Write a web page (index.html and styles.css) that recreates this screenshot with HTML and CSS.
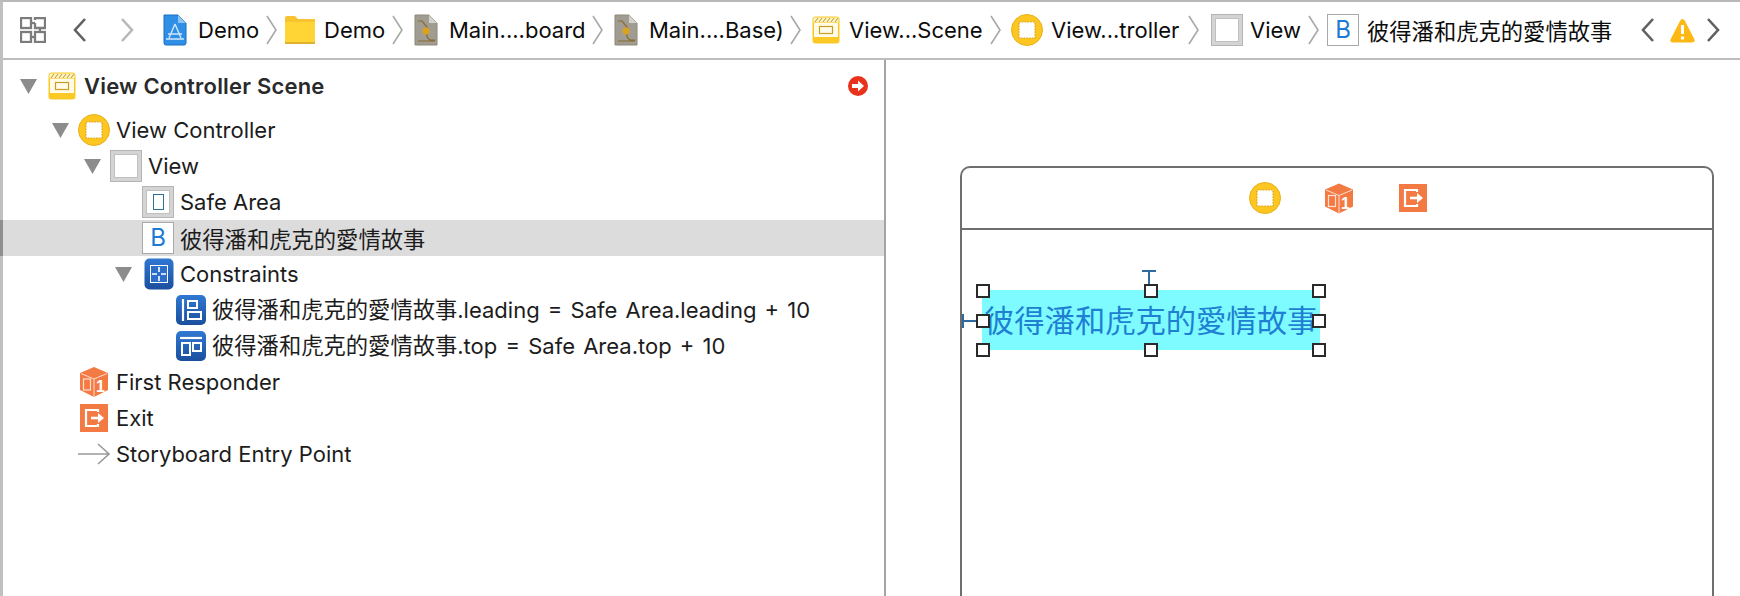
FILE: index.html
```html
<!DOCTYPE html>
<html lang="zh-Hant">
<head>
<meta charset="utf-8">
<title>Storyboard</title>
<link rel="stylesheet" href="styles.css">
</head>
<body>
<svg class="defs" width="0" height="0" aria-hidden="true">
  <defs>
    <linearGradient id="blue" x1="0" y1="0" x2="0" y2="1"><stop offset="0" stop-color="#2f78d2"/><stop offset="1" stop-color="#1b4f9e"/></linearGradient>
    <symbol id="chev" viewBox="0 0 11 30"><path d="M1 1 L10 15 L1 29" fill="none" stroke="#a8a8a8" stroke-width="1.6"/></symbol>
    <symbol id="doc-blue" viewBox="0 0 24 32">
      <path d="M1 1 H15 L23 9 V29 Q23 31 21 31 H3 Q1 31 1 29 Z" fill="#2f8fe6" stroke="#1d6fc0"/>
      <path d="M15 1 V9 H23" fill="#8cc4f4"/>
      <path d="M12 10 L6 24 M12 10 L18 24 M5 20 H19 M3 25 H21" fill="none" stroke="#cfe6fb" stroke-width="1.4"/>
    </symbol>
    <symbol id="folder" viewBox="0 0 32 30">
      <path d="M1 3 Q1 1 3 1 H11 L14 4 H31 V28 Q31 29 30 29 H2 Q1 29 1 28 Z" fill="#f7c331"/>
      <path d="M1 7 H31 V27 Q31 28 30 28 H2 Q1 28 1 27 Z" fill="#ffd535"/>
      <path d="M1 28 H31" stroke="#d9a92c" stroke-width="1.6"/>
    </symbol>
    <symbol id="board" viewBox="0 0 24 32">
      <path d="M1 1 H15 L23 9 V31 H1 Z" fill="#a09c92" stroke="#8d8878"/>
      <path d="M15 1 V9 H23" fill="#d3d1cb"/>
      <path d="M4 7 H8 L13 13 V23 L16 26 H21 M4 27 H21" fill="none" stroke="#8a6b2c" stroke-width="1.2"/>
      <circle cx="12" cy="17" r="3.6" fill="#d9a21f"/>
    </symbol>
    <symbol id="scene" viewBox="0 0 28 28">
      <rect x="0.5" y="0.5" width="27" height="27" rx="3" fill="#fbc925"/>
      <rect x="1.5" y="1.5" width="25" height="5" fill="#fff3c0"/>
      <path d="M3 6 L6 2 M7 6 L10 2 M11 6 L14 2 M15 6 L18 2 M19 6 L22 2 M23 6 L26 2" stroke="#b79a3a" stroke-width="1"/>
      <rect x="2" y="7" width="24" height="14" fill="#fffbe6"/>
      <rect x="7.500" y="10.500" width="13" height="7" fill="none" stroke="#c89f24" stroke-width="1.2"/>
    </symbol>
    <symbol id="vc" viewBox="0 0 32 32">
      <circle cx="16" cy="16" r="15.500" fill="#fdc621" stroke="#e8b01a" stroke-width="1"/>
      <rect x="8" y="8" width="16" height="16" fill="#fff" stroke="#d8a420" stroke-width="1.2" stroke-dasharray="1.6 1.2"/>
    </symbol>
    <symbol id="constraints" viewBox="0 0 30 32">
      <rect x="0.500" y="0.500" width="29" height="31" rx="5" fill="url(#blue)"/>
      <rect x="6" y="7" width="18" height="18" fill="#fff"/>
      <rect x="7" y="8" width="16" height="16" fill="#2b6fcb"/>
      <path d="M15 9 V14 M15 18 V23 M8 16 H13 M17 16 H22" stroke="#fff" stroke-width="1.6"/>
    </symbol>
    <symbol id="lead" viewBox="0 0 30 30">
      <rect width="30" height="30" rx="5" fill="url(#blue)"/>
      <path d="M7 4 V26" stroke="#fff" stroke-width="2.2"/>
      <rect x="12" y="6" width="9" height="7" fill="none" stroke="#fff" stroke-width="2"/>
      <rect x="12" y="17" width="13" height="7" fill="none" stroke="#fff" stroke-width="2"/>
    </symbol>
    <symbol id="top" viewBox="0 0 30 30">
      <rect width="30" height="30" rx="5" fill="url(#blue)"/>
      <path d="M4 7 H26" stroke="#fff" stroke-width="2.2"/>
      <rect x="6" y="12" width="8" height="12" fill="none" stroke="#fff" stroke-width="2"/>
      <rect x="17" y="12" width="8" height="8" fill="none" stroke="#fff" stroke-width="2"/>
    </symbol>
    <symbol id="cube" viewBox="0 0 28 30">
      <path d="M14 0 L28 6 V23 L14 30 L0 23 V6 Z" fill="#f47a44"/>
      <path d="M1 6.500 L14 12 L27 6.500 M14 12 V30" fill="none" stroke="#fde0d0" stroke-width="1"/>
      <rect x="3.500" y="12" width="7" height="11" fill="none" stroke="#fde0d0" stroke-width="1.2"/>
      <text x="20.500" y="25" class="cube-one">1</text>
    </symbol>
    <symbol id="exit" viewBox="0 0 28 28">
      <rect width="28" height="28" fill="#f47a44"/>
      <path d="M18 8 V6 H6 V22 H18 V20" fill="none" stroke="#fff" stroke-width="2.2"/>
      <path d="M11 14 H19" stroke="#fff" stroke-width="2.6"/>
      <path d="M18 9 L24 14 L18 19 Z" fill="#fff"/>
    </symbol>
  </defs>
</svg>

<div class="shell">
  <header class="toolbar">
    <svg class="ic-grid" width="26" height="26" viewBox="0 0 26 26"><g fill="none" stroke="#7c7c7c" stroke-width="2.300"><rect x="1" y="1" width="10" height="10"/><path d="M11 6 H15"/><path d="M15 3 V1 H25 V11 H15 V6"/><path d="M20 11 V15"/><rect x="15" y="15" width="10" height="10"/><path d="M15 20 H11"/><rect x="1" y="15" width="10" height="10"/></g></svg>
    <svg class="nav back" width="15" height="26" viewBox="0 0 15 26"><path d="M13 2 L3 13 L13 24" fill="none" stroke="#606060" stroke-width="2.6"/></svg>
    <svg class="nav forward" width="15" height="26" viewBox="0 0 15 26"><path d="M2 2 L12 13 L2 24" fill="none" stroke="#b8b8b8" stroke-width="2.6"/></svg>

    <nav class="crumbs">
      <svg class="c-doc" width="24" height="32"><use href="#doc-blue"/></svg>
      <span class="crumb w-demo">Demo</span>
      <svg class="sep" width="11" height="30"><use href="#chev"/></svg>
      <svg class="c-folder" width="32" height="30"><use href="#folder"/></svg>
      <span class="crumb w-demo">Demo</span>
      <svg class="sep" width="11" height="30"><use href="#chev"/></svg>
      <svg class="c-doc c-board" width="24" height="32"><use href="#board"/></svg>
      <span class="crumb w-main1">Main....board</span>
      <svg class="sep" width="11" height="30"><use href="#chev"/></svg>
      <svg class="c-doc c-board" width="24" height="32"><use href="#board"/></svg>
      <span class="crumb w-main2">Main....Base)</span>
      <svg class="sep" width="11" height="30"><use href="#chev"/></svg>
      <svg class="c-scene" width="28" height="28"><use href="#scene"/></svg>
      <span class="crumb w-scene">View...Scene</span>
      <svg class="sep" width="11" height="30"><use href="#chev"/></svg>
      <svg class="c-vc" width="32" height="32"><use href="#vc"/></svg>
      <span class="crumb w-ctrl">View...troller</span>
      <svg class="sep" width="11" height="30"><use href="#chev"/></svg>
      <span class="ic-view c-view"></span>
      <span class="crumb w-view">View</span>
      <svg class="sep" width="11" height="30"><use href="#chev"/></svg>
      <span class="ic-b c-b">B</span>
      <span class="crumb cjk w-cjk">彼得潘和虎克的愛情故事</span>
    </nav>

    <svg class="nav issue-prev" width="15" height="26" viewBox="0 0 15 26"><path d="M13 2 L3 13 L13 24" fill="none" stroke="#606060" stroke-width="2.6"/></svg>
    <svg class="warn" width="25" height="25" viewBox="0 0 25 25"><path d="M12.500 1 Q14 1 15 3 L24.500 21.500 Q25.500 24.500 22 24.500 H3 Q-0.500 24.500 0.500 21.500 L10 3 Q11 1 12.500 1 Z" fill="#fdb813"/><path d="M12.500 7 V16" stroke="#fff" stroke-width="3"/><circle cx="12.500" cy="20" r="1.8" fill="#fff"/></svg>
    <svg class="nav issue-next" width="15" height="26" viewBox="0 0 15 26"><path d="M2 2 L12 13 L2 24" fill="none" stroke="#606060" stroke-width="2.6"/></svg>
  </header>

  <main class="workspace">
    <section class="outline">
      <div class="row scene-row">
        <svg class="tri" width="17" height="15" viewBox="0 0 17 15"><path d="M0 0 H17 L8.500 15 Z" fill="#8c8c8c"/></svg>
        <svg class="ic28" width="28" height="28"><use href="#scene"/></svg>
        <span class="label strong">View Controller Scene</span>
        <svg class="go" width="20" height="20" viewBox="0 0 20 20"><circle cx="10" cy="10" r="10" fill="#e8321c"/><path d="M4 8 H10 V4.500 L16 10 L10 15.500 V12 H4 Z" fill="#fff"/></svg>
      </div>
      <div class="row lv1">
        <svg class="tri" width="17" height="15" viewBox="0 0 17 15"><path d="M0 0 H17 L8.500 15 Z" fill="#8c8c8c"/></svg>
        <svg class="ic32" width="32" height="32"><use href="#vc"/></svg>
        <span class="label">View Controller</span>
      </div>
      <div class="row lv2">
        <svg class="tri" width="17" height="15" viewBox="0 0 17 15"><path d="M0 0 H17 L8.500 15 Z" fill="#8c8c8c"/></svg>
        <span class="ic-view ic32"></span>
        <span class="label">View</span>
      </div>
      <div class="row lv3">
        <span class="ic-view ic32 safe"><span class="safe-in"></span></span>
        <span class="label">Safe Area</span>
      </div>
      <div class="row lv3 selected">
        <span class="ic-b ic32">B</span>
        <span class="label cjk">彼得潘和虎克的愛情故事</span>
      </div>
      <div class="row lv3b">
        <svg class="tri" width="17" height="15" viewBox="0 0 17 15"><path d="M0 0 H17 L8.500 15 Z" fill="#8c8c8c"/></svg>
        <svg class="ic-c" width="30" height="32"><use href="#constraints"/></svg>
        <span class="label">Constraints</span>
      </div>
      <div class="row lv4">
        <svg class="ic-c" width="30" height="30"><use href="#lead"/></svg>
        <span class="label eq"><span class="cjk">彼得潘和虎克的愛情故事</span>.leading = Safe Area.leading + 10</span>
      </div>
      <div class="row lv4">
        <svg class="ic-c" width="30" height="30"><use href="#top"/></svg>
        <span class="label eq"><span class="cjk">彼得潘和虎克的愛情故事</span>.top = Safe Area.top + 10</span>
      </div>
      <div class="row lv0">
        <svg class="ic28" width="28" height="30"><use href="#cube"/></svg>
        <span class="label">First Responder</span>
      </div>
      <div class="row lv0">
        <svg class="ic28" width="28" height="28"><use href="#exit"/></svg>
        <span class="label">Exit</span>
      </div>
      <div class="row lv0">
        <svg class="ic-arrow" width="32" height="22" viewBox="0 0 32 22"><path d="M0 11 H31 M20 1 L31 11 L20 21" fill="none" stroke="#9a9a9a" stroke-width="1.6"/></svg>
        <span class="label">Storyboard Entry Point</span>
      </div>
    </section>

    <section class="canvas">
      <div class="device">
        <div class="dock">
          <svg width="32" height="32"><use href="#vc"/></svg>
          <svg class="dock-cube" width="28" height="31"><use href="#cube"/></svg>
          <svg width="28" height="28"><use href="#exit"/></svg>
        </div>
        <div class="stage">
          <span class="guide-top"></span>
          <span class="guide-left"></span>
          <div class="lbl">彼得潘和虎克的愛情故事</div>
          <span class="hd h-tl"></span><span class="hd h-tc"></span><span class="hd h-tr"></span>
          <span class="hd h-ml"></span><span class="hd h-mr"></span>
          <span class="hd h-bl"></span><span class="hd h-bc"></span><span class="hd h-br"></span>
        </div>
      </div>
    </section>
  </main>
</div>
</body>
</html>
```
FILE: styles.css
```css
* { box-sizing: border-box; }
html, body { margin: 0; height: 596px; overflow: hidden; background: #fff; }
body { font-family: Inter, "Noto Sans CJK TC", sans-serif; color: #1c1c1c; }
.defs { position: absolute; }
.cube-one { font: 700 16px "Liberation Sans", sans-serif; fill: #fff; text-anchor: middle; }

.shell { height: 596px; display: flex; flex-direction: column; border-left: 3px solid #c0c0c0; border-top: 2px solid #b8b8b8; }

/* Toolbar */
.toolbar { height: 58px; flex: none; display: flex; align-items: center; border-bottom: 2px solid #bdbdbd; padding-left: 17px; color: #0c0c0c; }
.ic-grid { flex: none; margin-right: 26px; }
.nav { flex: none; }
.forward { margin-left: 33px; }
.crumbs { display: flex; align-items: center; margin-left: 28px; width: 1454px; font-size: 22px; flex: none; }
.crumbs svg, .crumbs .ic-view, .crumbs .ic-b { flex: none; }
.crumb { white-space: nowrap; flex: none; line-height: 30px; margin: 0 1px 0 -1px; }
.sep { margin: 0 7px 0 8px; }
.c-doc { margin-right: 12px; }
.c-board { margin-left: 4px; }
.c-folder { margin-right: 9px; }
.c-scene { margin: 0 10px 0 4px; }
.c-vc { margin: 0 9px 0 3px; }
.c-view { margin: 0 8px 0 5px; }
.c-b { margin: 0 9px 0 1px; }
.w-demo { width: 59px; }
.w-main1 { width: 134px; } .w-main2 { width: 132px; }
.w-scene { width: 132px; } .w-ctrl { width: 128px; } .w-view { width: 49px; }
.w-cjk { width: 245px; }
.cjk { font-family: "Noto Sans CJK TC", sans-serif; font-size: 22.3px; line-height: 1; }
.issue-prev { margin-left: 23px; }
.warn { margin: 0 11px 0 15px; flex: none; }

.ic-view { width: 32px; height: 32px; border: 1px solid #b4b4b4; background: #d4d4d4; display: flex; align-items: center; justify-content: center; }
.ic-view::before { content: ""; width: 22px; height: 22px; background: #fff; border: 1px solid #c0c0c0; }
.ic-b { width: 32px; height: 32px; border: 1px solid #a9a9a9; background: #fff; color: #1f7ad6; font-size: 24px; line-height: 1; display: flex; align-items: center; justify-content: center; }

/* Workspace */
.workspace { flex: 1; display: flex; min-height: 0; }
.outline { width: 883px; flex: none; border-right: 2px solid #a4a4a4; padding-top: 8px; font-size: 22px; }
.row { height: 36px; display: flex; align-items: center; white-space: nowrap; }
.label { line-height: 28px; }
.eq { word-spacing: 2px; }
.scene-row { padding-left: 17px; margin-bottom: 8px; padding-right: 16px; }
.scene-row .tri { margin-right: 11px; }
.scene-row .ic28 { margin-right: 8px; }
.strong { font-weight: 600; color: #2a2a2a; letter-spacing: 0.2px; }
.go { margin-left: auto; flex: none; }
.ic28 { margin-right: 8px; flex: none; }
.ic32 { flex: none; margin-right: 6px; }
.ic-c { flex: none; margin-right: 6px; }
.tri { flex: none; margin-right: 9px; }
.lv0 { padding-left: 77px; }
.ic-arrow { flex: none; margin: 0 6px 0 -2px; }
.lv1 { padding-left: 49px; }
.lv2 { padding-left: 81px; }
.lv3 { padding-left: 139px; }
.lv3b { padding-left: 112px; }
.lv3b .tri { margin-right: 12px; }
.lv4 { padding-left: 173px; }
.selected { background: #dcdcdc; margin-left: -3px; padding-left: 139px; border-left: 3px solid #8f8f8f; }
.safe { position: relative; }
.safe-in { position: absolute; left: 10px; top: 7px; width: 11px; height: 16px; border: 1px solid #2f6f96; background: #fff; }

/* Canvas */
.canvas { flex: 1; min-width: 0; padding: 106px 26px 0 74px; overflow: hidden; }
.device { height: 470px; border: 2px solid #6e6e6e; border-radius: 10px 10px 0 0; border-bottom: 0; }
.dock { height: 62px; border-bottom: 2px solid #6e6e6e; display: flex; align-items: center; padding-left: 287px; gap: 44px; }
.dock svg { flex: none; }
.dock-cube { margin-right: 2px; }
.stage { position: relative; height: 400px; }
.lbl { position: absolute; left: 20px; top: 60px; width: 338px; height: 60px; background: #7dfbff; color: #1f7fd2; font: 30.3px/58px "Noto Sans CJK TC", sans-serif; padding-left: 2px; white-space: nowrap; }
.hd { position: absolute; width: 14px; height: 14px; background: #fff; border: 2px solid #2a2a2a; }
.h-tl { left: 14px; top: 54px; } .h-tc { left: 182px; top: 54px; } .h-tr { left: 350px; top: 54px; }
.h-ml { left: 14px; top: 84px; } .h-mr { left: 350px; top: 84px; }
.h-bl { left: 14px; top: 113px; } .h-bc { left: 182px; top: 113px; } .h-br { left: 350px; top: 113px; }
.guide-top { position: absolute; left: 180px; top: 40px; width: 14px; height: 14px; border-top: 2px solid #2f6aa0; }
.guide-top::after { content: ""; position: absolute; left: 6px; top: 0; width: 2px; height: 14px; background: #2f6aa0; }
.guide-left { position: absolute; left: 0; top: 84px; width: 14px; height: 14px; border-left: 2px solid #2f6aa0; }
.guide-left::after { content: ""; position: absolute; left: 0; top: 6px; width: 14px; height: 2px; background: #2f6aa0; }
```
